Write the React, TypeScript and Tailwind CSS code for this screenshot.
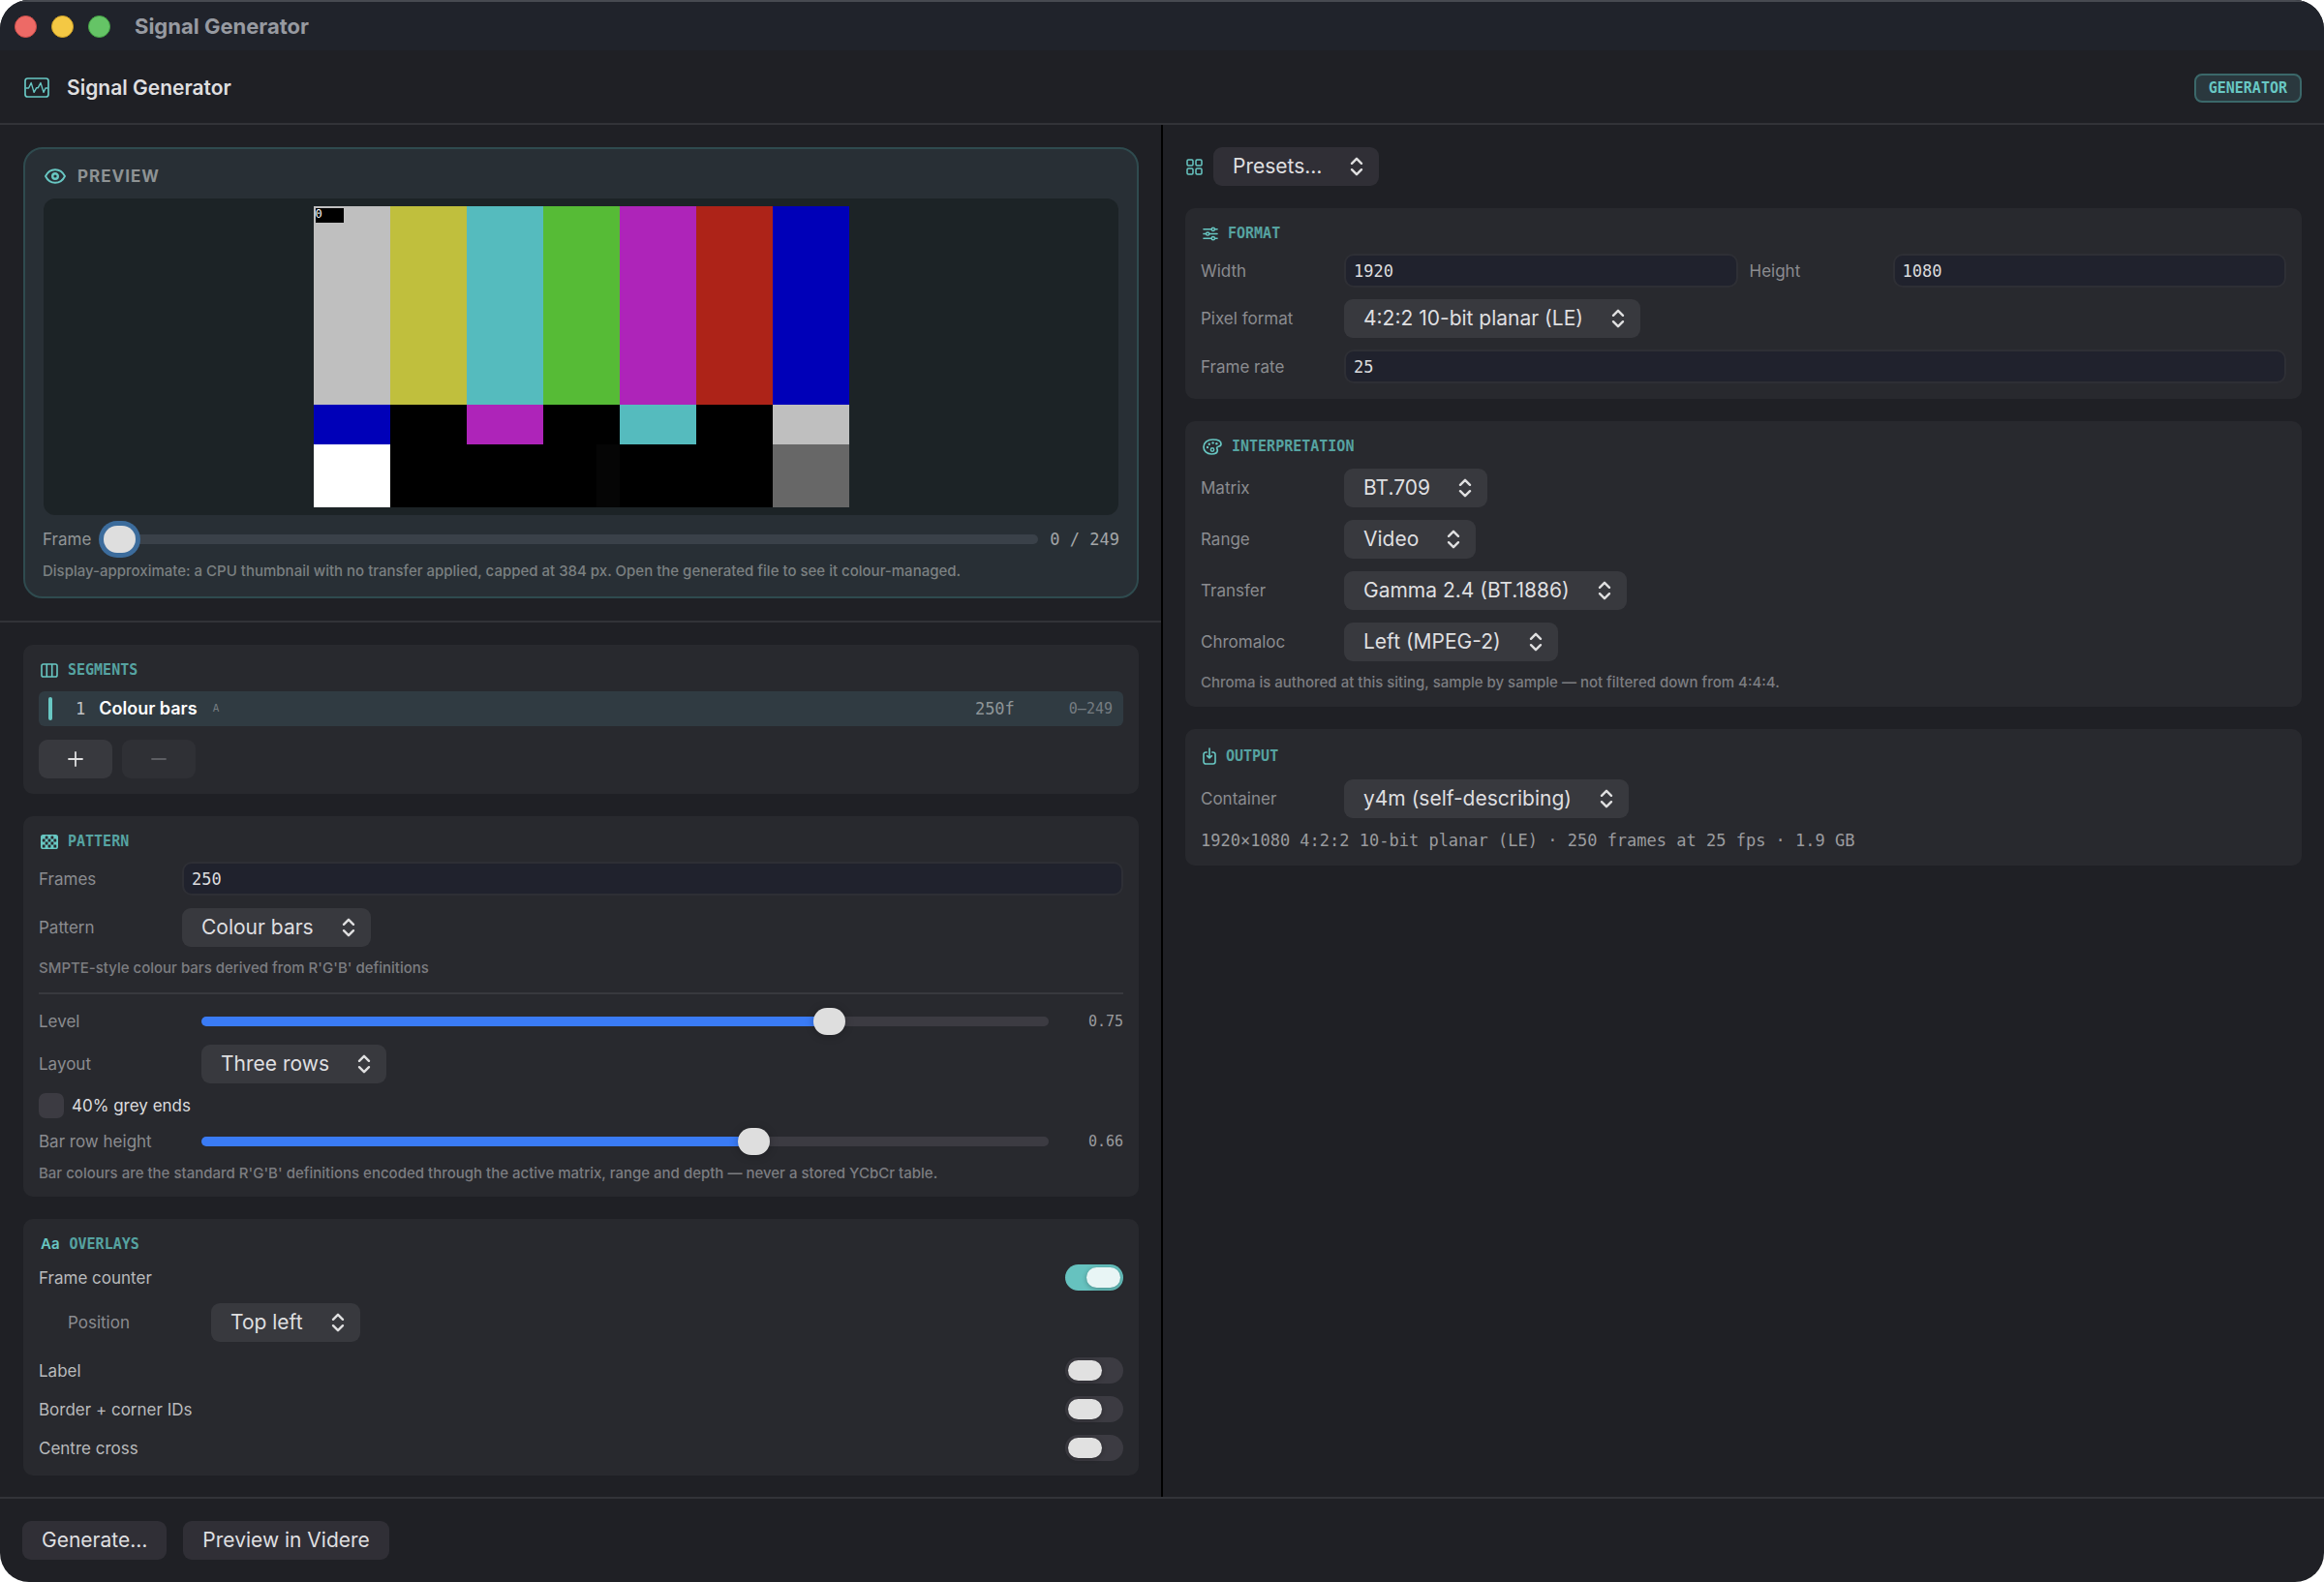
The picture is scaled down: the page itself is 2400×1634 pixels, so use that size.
import React, { useId, useState } from "react";

const svgBase = "shrink-0 fill-none stroke-[#68c7c3]";

function WaveIcon() {
  return (
    <svg viewBox="0 0 26 21" className={`${svgBase} h-[21px] w-[26px]`} strokeWidth="1.7" strokeLinejoin="round" strokeLinecap="round" aria-hidden="true">
      <rect x="1" y="1" width="24" height="19" rx="2.6" />
      <path d="M2 11h2.600L7.200 5.600l2.900 9.800 2.500-4.600h1.600l2.800-5.200 3 9.800 2-4.400h2" strokeWidth="1.4" />
    </svg>
  );
}

function EyeIcon() {
  return (
    <svg viewBox="0 0 22 16" className={`${svgBase} h-4 w-[22px]`} strokeWidth="1.9" aria-hidden="true">
      <path d="M1 8C3.2 3.6 6.800 1.200 11 1.200S18.800 3.600 21 8c-2.200 4.400-5.800 6.800-10 6.800S3.200 12.400 1 8z" strokeLinejoin="round" />
      <circle cx="11" cy="8" r="2.800" strokeWidth="2.400" />
    </svg>
  );
}

function ColumnsIcon() {
  return (
    <svg viewBox="0 0 18 15" className={`${svgBase} h-[15px] w-[18px]`} strokeWidth="1.6" aria-hidden="true">
      <rect x="1" y="1" width="16" height="13" rx="1.800" />
      <path d="M6.300 1v13M11.700 1v13" />
    </svg>
  );
}

function CheckerIcon() {
  return (
    <svg viewBox="0 0 18 15" className="h-[15px] w-[18px] shrink-0" aria-hidden="true">
      <rect x="0" y="0" width="18" height="15" rx="2.600" fill="#68c7c3" />
      <g fill="#28292e">
        {[0, 1, 2, 3].map((r) =>
          [0, 1, 2, 3, 4].map((c) =>
            (r + c) % 2 === 1 ? <rect key={`${r}-${c}`} x={1.8 + c * 2.9} y={1.6 + r * 3} width="2.800" height="2.800" rx="0.500" /> : null,
          ),
        )}
      </g>
    </svg>
  );
}

function GridIcon() {
  return (
    <svg viewBox="0 0 17 17" className={`${svgBase} h-[17px] w-[17px]`} strokeWidth="1.500" aria-hidden="true">
      <rect x="1" y="1" width="6" height="6" rx="1.200" />
      <rect x="10" y="1" width="6" height="6" rx="1.200" />
      <rect x="1" y="10" width="6" height="6" rx="1.200" />
      <rect x="10" y="10" width="6" height="6" rx="1.200" />
    </svg>
  );
}

function SlidersIcon() {
  return (
    <svg viewBox="0 0 17 15" className={`${svgBase} h-[15px] w-4`} strokeWidth="1.600" strokeLinecap="round" aria-hidden="true">
      <path d="M1 2.500h8.500M13.500 2.500H16M1 7.500h2.500M7.500 7.500H16M1 12.500h8.500M13.500 12.500H16" />
      <circle cx="11.500" cy="2.500" r="1.700" />
      <circle cx="5.500" cy="7.500" r="1.700" />
      <circle cx="11.500" cy="12.500" r="1.700" />
    </svg>
  );
}

function PaletteIcon() {
  return (
    <svg viewBox="0 0 20 17" className={`${svgBase} h-[17px] w-5`} strokeWidth="1.700" aria-hidden="true">
      <path d="M10.500 1C5 1 1 4.200 1 8.700 1 13 4.400 16 9 16c3.600 0 6.300-1.500 6.300-3.700 0-1.300-.7-1.900-.7-2.700 0-1 1-1.300 2.200-1.600 1.400-.3 2.200-1 2.200-2.500C19 2.800 15.500 1 10.500 1z" strokeLinejoin="round" />
      <circle cx="10" cy="11.500" r="1.700" strokeWidth="1.400" />
      <g fill="#68c7c3" stroke="none">
        <circle cx="5" cy="9" r="1.200" />
        <circle cx="6.800" cy="5.800" r="1.200" />
        <circle cx="10.600" cy="4.400" r="1.200" />
        <circle cx="14.400" cy="5.200" r="1.200" />
      </g>
    </svg>
  );
}

function DownloadIcon() {
  return (
    <svg viewBox="0 0 14 18" className={`${svgBase} h-[18px] w-3.5`} strokeWidth="1.600" strokeLinecap="round" strokeLinejoin="round" aria-hidden="true">
      <path d="M4.200 5H3.200A2.200 2.200 0 0 0 1 7.200v7.600A2.200 2.200 0 0 0 3.200 17h7.600a2.200 2.200 0 0 0 2.200-2.200V7.200A2.200 2.200 0 0 0 10.800 5h-1" />
      <path d="M7 1v9.800M4.600 8.600 7 11l2.400-2.400" />
    </svg>
  );
}

function Card({
  icon,
  title,
  children,
  head = "h-5 mb-[11px]",
  pb = "pb-4",
}: {
  icon: React.ReactNode;
  title: string;
  children: React.ReactNode;
  head?: string;
  pb?: string;
}) {
  return (
    <section className={`rounded-[10px] bg-[#28292e] px-4 pt-4 ${pb}`}>
      <h2 className={`flex items-center gap-2.5 pl-0.5 font-['DejaVu_Sans_Mono',monospace] text-[15px] leading-5 font-bold text-[#56a3a1] ${head}`}>
        {icon}
        {title}
      </h2>
      {children}
    </section>
  );
}

function Picker({ id, value, label, tone = "bg-[#38393e]" }: { id?: string; value: string; label?: string; tone?: string }) {
  return (
    <div className="relative inline-flex">
      <select
        id={id}
        aria-label={label}
        defaultValue={value}
        className={`h-10 appearance-none rounded-[9px] pr-[59px] pl-5 field-sizing-content text-[21px] leading-[26px] text-[#dfdfe0] ${tone}`}
      >
        <option>{value}</option>
      </select>
      <svg viewBox="0 0 14 20" className="pointer-events-none absolute top-2.5 right-4 h-5 w-3.5 fill-none stroke-[#dfdfe0]" strokeWidth="2.400" strokeLinecap="round" strokeLinejoin="round" aria-hidden="true">
        <path d="M2 6.800 7 1.800l5 5M2 13.200l5 5 5-5" />
      </svg>
    </div>
  );
}

function PickerRow({ label, value, labelWidth = "w-[148px]" }: { label: string; value: string; labelWidth?: string }) {
  const id = useId();
  return (
    <div className="flex items-center">
      <label htmlFor={id} className={`shrink-0 text-[17px] leading-5 text-[#8b8c90] ${labelWidth}`}>{label}</label>
      <Picker id={id} value={value} />
    </div>
  );
}

function FieldRow({ label, value }: { label: string; value: string }) {
  const id = useId();
  return (
    <div className="flex flex-1 items-center">
      <label htmlFor={id} className="w-[148px] shrink-0 text-[17px] leading-5 text-[#8b8c90]">{label}</label>
      <input
        id={id}
        type="text"
        defaultValue={value}
        className="h-[35px] w-full min-w-0 rounded-[10px] border-2 border-[#2e2f35] bg-[#20222d] px-2 font-['DejaVu_Sans_Mono',monospace] text-[17px] leading-5 text-[#dcdcde]"
      />
    </div>
  );
}

const rangeClass =
  "h-7 w-full min-w-0 appearance-none bg-transparent outline-none [&::-webkit-slider-runnable-track]:h-2.5 [&::-webkit-slider-runnable-track]:rounded-full [&::-webkit-slider-thumb]:-mt-[9px] [&::-webkit-slider-thumb]:h-7 [&::-webkit-slider-thumb]:w-[33px] [&::-webkit-slider-thumb]:appearance-none [&::-webkit-slider-thumb]:rounded-[14px] [&::-webkit-slider-thumb]:bg-[#dedede]";

function SliderRow({ label, initial }: { label: string; initial: number }) {
  const id = useId();
  const [v, setV] = useState(initial);
  return (
    <div className="flex items-center">
      <label htmlFor={id} className="w-[168px] shrink-0 text-[17px] leading-5 text-[#8b8c90]">{label}</label>
      <input
        id={id}
        type="range"
        min={0}
        max={1}
        step={0.001}
        value={v}
        onChange={(e) => setV(Number(e.target.value))}
        style={{ "--fill": `${v * 100}%` } as React.CSSProperties}
        className={`${rangeClass} [&::-webkit-slider-runnable-track]:bg-[linear-gradient(to_right,#3a7bf5_var(--fill),#3c3b42_var(--fill))] [&::-webkit-slider-thumb]:shadow-[0_1px_8px_rgba(0,0,0,0.25)]`}
      />
      <output htmlFor={id} className="w-[77px] shrink-0 text-right font-['DejaVu_Sans_Mono',monospace] text-[15px] leading-5 text-[#9a9b9e]">{v.toFixed(2)}</output>
    </div>
  );
}

function ToggleRow({ label, on = false }: { label: string; on?: boolean }) {
  return (
    <label className="flex h-[27px] items-center justify-between text-[17px] leading-5 text-[#b9babc]">
      {label}
      <input
        type="checkbox"
        role="switch"
        defaultChecked={on}
        className="flex h-[27px] w-[60px] appearance-none items-center rounded-full bg-[#3c3b42] px-[3px] before:h-[21px] before:w-[35px] before:rounded-full before:bg-[#e1e1e1] before:shadow-[0_1px_5px_rgba(0,0,0,0.3)] checked:justify-end checked:bg-[#66c2bf] checked:before:bg-[#e8f5f5]"
      />
    </label>
  );
}

function Bars() {
  return (
    <div className="relative grid aspect-[553/311] w-[553px] max-w-full grid-rows-[205fr_41fr_65fr]">
      <div className="grid grid-cols-7">
        <div className="bg-[#bfbfbf]" />
        <div className="bg-[#c0bf3d]" />
        <div className="bg-[#55bbbe]" />
        <div className="bg-[#56bb36]" />
        <div className="bg-[#ae24b9]" />
        <div className="bg-[#ad2318]" />
        <div className="bg-[#0000b8]" />
      </div>
      <div className="grid grid-cols-7 bg-black">
        <div className="bg-[#0000b8]" />
        <div />
        <div className="bg-[#ae24b9]" />
        <div />
        <div className="bg-[#55bbbe]" />
        <div />
        <div className="bg-[#bfbfbf]" />
      </div>
      <div className="grid grid-cols-7 bg-black">
        <div className="bg-white" />
        <div />
        <div />
        <div className="flex justify-end"><div className="w-6 bg-[#050505]" /></div>
        <div />
        <div />
        <div className="bg-[#676767]" />
      </div>
      <div className="absolute top-0.5 left-0.5 h-[15px] w-[29px] bg-black font-['DejaVu_Sans_Mono',monospace] text-xs leading-3 text-white">0</div>
    </div>
  );
}

function Note({ children, className = "text-[#7c7d81]" }: { children: React.ReactNode; className?: string }) {
  return <p className={`text-[15px] leading-[18px] font-medium ${className}`}>{children}</p>;
}

export default function App() {
  return (
    <div className="flex min-h-screen flex-col overflow-hidden rounded-[30px] bg-[#1f2025] font-['Inter',sans-serif]">
      <div className="flex h-[52px] shrink-0 items-center border-t-2 border-[#474a51] bg-[#20232b] pl-[15px]">
        <div className="flex gap-[15px]">
          <button aria-label="Close" className="size-[23px] rounded-full border border-[#d2504c] bg-[#ed6a66]" />
          <button aria-label="Minimise" className="size-[23px] rounded-full border border-[#d3a427] bg-[#f4c844]" />
          <button aria-label="Zoom" className="size-[23px] rounded-full border border-[#46a546] bg-[#65c466]" />
        </div>
        <span className="ml-[25px] text-[22px] leading-7 font-bold text-[#979aa1]">Signal Generator</span>
      </div>

      <header className="flex h-[77px] shrink-0 items-center border-b-2 border-[#323338] px-[23px] pt-0.5">
        <div className="flex items-center gap-[18px] pl-0.5">
          <WaveIcon />
          <h1 className="text-[21px] leading-7 font-semibold text-[#dfdfe0]">Signal Generator</h1>
        </div>
        <span className="ml-auto flex h-[30px] items-center rounded-[8px] border-2 border-[#3b686a] bg-[#2a383e] px-[13px] font-['DejaVu_Sans_Mono',monospace] text-[15px] leading-5 font-bold text-[#68c7c3]">GENERATOR</span>
      </header>

      <main className="grid flex-1 grid-cols-[1fr_2px_1fr]">
        <div className="min-w-0">
          <div className="border-b-2 border-[#323338] py-[23px] pr-[23px] pl-6">
            <section className="rounded-[20px] border-2 border-[#2f4b4f] bg-[#282f35] px-[18px] pt-[18px] pb-[17px]">
              <h2 className="mb-[13px] flex h-5 items-center gap-3 pl-0.5 text-[17px] leading-5 font-bold tracking-[1px] text-[#8e9394]">
                <EyeIcon />
                PREVIEW
              </h2>
              <div className="mx-px flex justify-center rounded-xl bg-[#1c2326] py-2">
                <Bars />
              </div>
              <div className="mt-[11px] flex items-center">
                <label htmlFor="frame" className="text-[17px] leading-5 text-[#929697]">Frame</label>
                <input
                  id="frame"
                  type="range"
                  min={0}
                  max={249}
                  defaultValue={0}
                  className={`${rangeClass} mr-3 ml-[13px] [&::-webkit-slider-runnable-track]:bg-[#3a4149] [&::-webkit-slider-thumb]:shadow-[0_0_0_5px_#3c6c9c]`}
                />
                <output htmlFor="frame" className="shrink-0 font-['DejaVu_Sans_Mono',monospace] text-[17px] leading-5 text-[#a3a6a8]">0 / 249</output>
              </div>
              <div className="mt-2.5">
                <Note className="text-[#7b8081]">Display-approximate: a CPU thumbnail with no transfer applied, capped at 384 px. Open the generated file to see it colour-managed.</Note>
              </div>
            </section>
          </div>

          <div className="flex flex-col gap-[23px] pt-[23px] pr-[23px] pb-[22px] pl-6">
            <Card icon={<ColumnsIcon />} title="SEGMENTS" head="h-5 mb-3">
              <button aria-pressed="true" className="flex h-9 w-full items-center rounded-md bg-[#303b42] pr-[11px] pl-2.5 text-left">
                <span className="h-6 w-1 rounded-full bg-[#68c7c3]" />
                <span className="ml-6 font-['DejaVu_Sans_Mono',monospace] text-[17px] leading-5 text-[#c0c3c5]">1</span>
                <span className="ml-3.5 text-[18px] leading-6 font-semibold text-white">Colour bars</span>
                <span className="ml-4 font-['DejaVu_Sans_Mono',monospace] text-[11px] leading-4 text-[#757c81]">A</span>
                <span className="ml-auto font-['DejaVu_Sans_Mono',monospace] text-[17px] leading-5 text-[#8e9598]">250f</span>
                <span className="ml-14 font-['DejaVu_Sans_Mono',monospace] text-[15px] leading-5 text-[#757c81]">0–249</span>
              </button>
              <div className="mt-3.5 flex gap-2.5">
                <button aria-label="Add segment" className="flex h-10 w-[76px] items-center justify-center rounded-[9px] bg-[#38393e]">
                  <svg viewBox="0 0 16 16" className="size-4 fill-none stroke-[#dfdfe0]" strokeWidth="1.800" strokeLinecap="round"><path d="M1 8h14M8 1v14" /></svg>
                </button>
                <button aria-label="Remove segment" disabled className="flex h-10 w-[76px] items-center justify-center rounded-[9px] bg-[#2f3035]">
                  <svg viewBox="0 0 16 16" className="size-4 fill-none stroke-[#5d5e63]" strokeWidth="1.800" strokeLinecap="round"><path d="M1 8h14" /></svg>
                </button>
              </div>
            </Card>

            <Card icon={<CheckerIcon />} title="PATTERN" pb="pb-[15px]">
              <div className="flex flex-col gap-[13px]">
                <FieldRow label="Frames" value="250" />
                <PickerRow label="Pattern" value="Colour bars" />
                <Note>SMPTE-style colour bars derived from R'G'B' definitions</Note>
              </div>
              <hr className="mt-4 mb-3.5 border-t-2 border-[#38393e]" />
              <div className="flex flex-col gap-2.5">
                <SliderRow label="Level" initial={0.75} />
                <PickerRow label="Layout" value="Three rows" labelWidth="w-[168px]" />
                <label className="flex items-center gap-2 text-[17px] leading-5 text-[#dcdcde]">
                  <input type="checkbox" className="size-[26px] appearance-none rounded-[7px] bg-[#3c3b42]" />
                  40% grey ends
                </label>
                <SliderRow label="Bar row height" initial={0.658} />
                <Note>Bar colours are the standard R'G'B' definitions encoded through the active matrix, range and depth — never a stored YCbCr table.</Note>
              </div>
            </Card>

            <Card icon={<span aria-hidden="true" className="font-['Inter',sans-serif] text-[15px] font-semibold text-[#68c7c3]">Aa</span>} title="OVERLAYS" pb="pb-[15px]">
              <div className="flex flex-col gap-[13px]">
                <ToggleRow label="Frame counter" on />
                <div className="mb-[3px] pl-[30px]">
                  <PickerRow label="Position" value="Top left" />
                </div>
                <ToggleRow label="Label" />
                <ToggleRow label="Border + corner IDs" />
                <ToggleRow label="Centre cross" />
              </div>
            </Card>
          </div>
        </div>

        <div className="bg-black" />

        <div className="flex min-w-0 flex-col gap-[23px] p-[23px]">
          <div className="flex items-center gap-[11px] pl-px">
            <GridIcon />
            <Picker label="Presets" value="Presets…" tone="bg-[#302f36]" />
          </div>

          <Card icon={<SlidersIcon />} title="FORMAT">
            <div className="flex flex-col gap-3">
              <div className="flex gap-3">
                <FieldRow label="Width" value="1920" />
                <FieldRow label="Height" value="1080" />
              </div>
              <PickerRow label="Pixel format" value="4:2:2 10-bit planar (LE)" />
              <FieldRow label="Frame rate" value="25" />
            </div>
          </Card>

          <Card icon={<PaletteIcon />} title="INTERPRETATION" head="h-5 mb-[13px]">
            <div className="flex flex-col gap-[13px]">
              <PickerRow label="Matrix" value="BT.709" />
              <PickerRow label="Range" value="Video" />
              <PickerRow label="Transfer" value="Gamma 2.4 (BT.1886)" />
              <PickerRow label="Chromaloc" value="Left (MPEG-2)" />
              <Note>Chroma is authored at this siting, sample by sample — not filtered down from 4:4:4.</Note>
            </div>
          </Card>

          <Card icon={<DownloadIcon />} title="OUTPUT" head="h-6 mb-3">
            <div className="flex flex-col gap-[13px]">
              <PickerRow label="Container" value="y4m (self-describing)" />
              <p className="font-['DejaVu_Sans_Mono',monospace] text-[17px] leading-5 text-[#9a9b9e]">1920×1080 4:2:2 10-bit planar (LE) · 250 frames at 25 fps · 1.9 GB</p>
            </div>
          </Card>
        </div>
      </main>

      <footer className="flex shrink-0 gap-[17px] border-t-2 border-[#323338] p-[23px]">
        <button className="h-10 rounded-[9px] bg-[#302f36] px-5 text-[21px] leading-[26px] text-[#dfdfe0]">Generate…</button>
        <button className="h-10 rounded-[9px] bg-[#302f36] px-5 text-[21px] leading-[26px] text-[#dfdfe0]">Preview in Videre</button>
      </footer>
    </div>
  );
}
